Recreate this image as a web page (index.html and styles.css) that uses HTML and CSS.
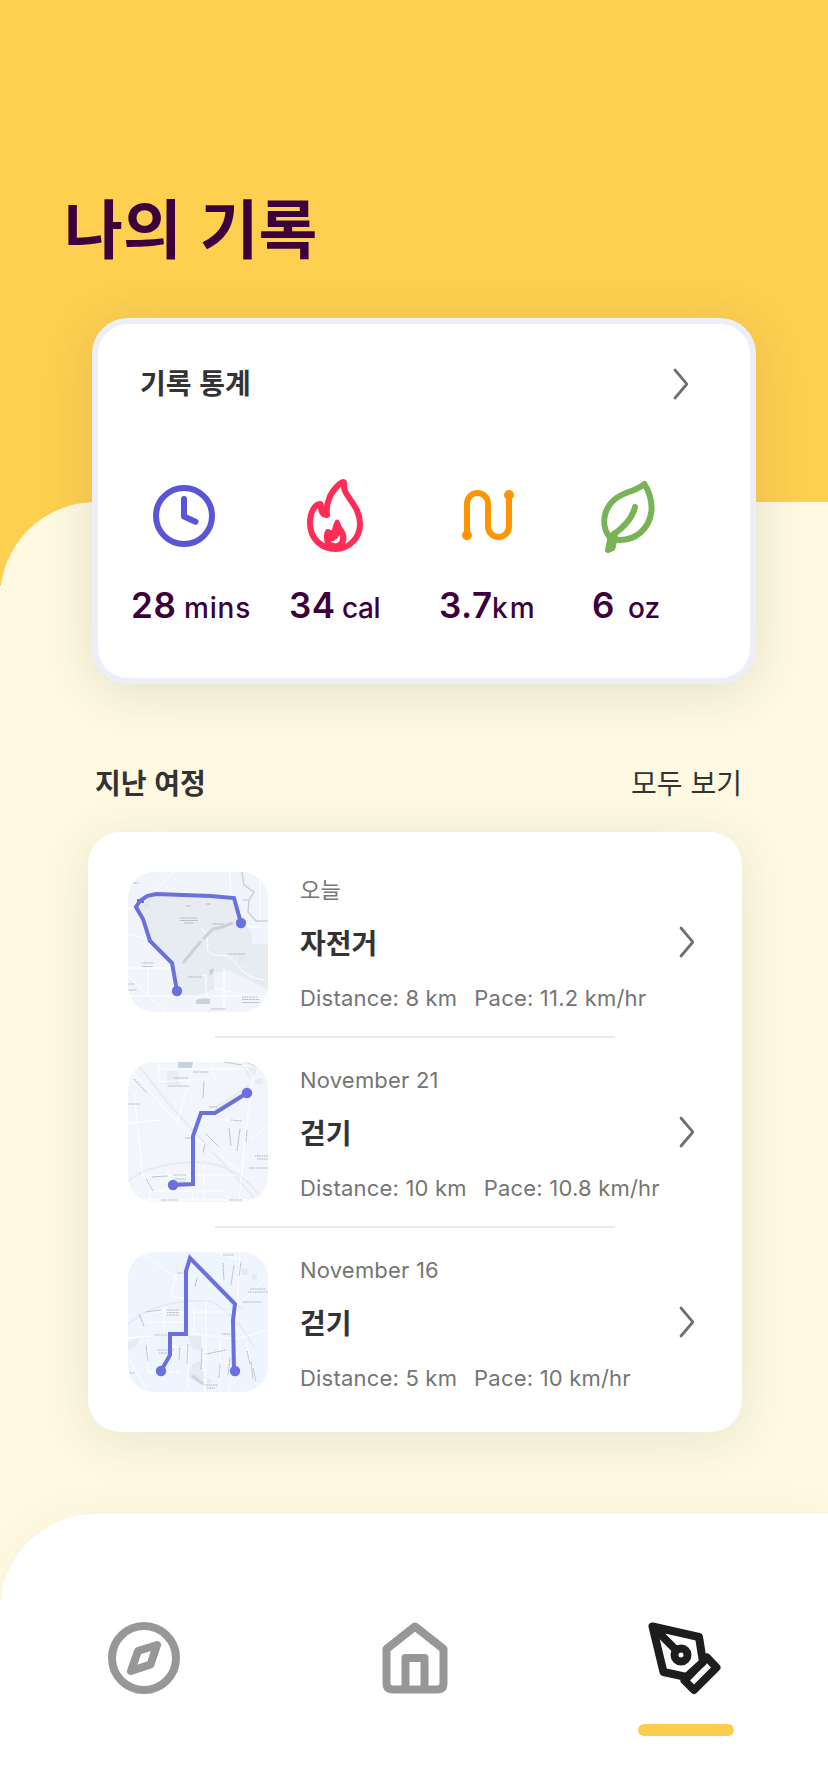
FILE: index.html
```html
<!DOCTYPE html>
<html lang="ko">
<head>
<meta charset="utf-8">
<title>나의 기록</title>
<link rel="stylesheet" href="styles.css">
</head>
<body>
<div class="app">
  <header class="hero"><h1 class="hero-title">나의 기록</h1></header>
  <main class="sheet">
    <section class="stats">
      <div class="stats-head">
        <h2 class="label">기록 통계</h2>
        <svg class="chevron" viewBox="0 0 18 34"><path d="M3 3 14.5 16.6Q15 17 14.5 17.5L3 31"/></svg>
      </div>
      <div class="stats-grid">
        <div class="stat">
          <svg class="stat-icon clock" viewBox="142 474 84 84"><circle cx="184" cy="516" r="28"/><path d="M184 499V516.5L195.500 521.7"/></svg>
          <p class="value"><b class="n28">28</b><span class="mins">mins</span></p>
        </div>
        <div class="stat">
          <svg class="stat-icon flame" viewBox="293 474 84 84"><path d="M343 482C346 482 342 486 345.500 492C350 501 360 509 360 524C360 538 349 549 335.500 549C322 549 310 539 310 523C310 511 316 504 320 504C322 504 320 509 322 512C324 515 327 515 327 515C327 515 326 506 329 499C332 490 341 482 343 482Z"/><path class="ember" d="M325.500 545C323 538 323.500 529.500 327.500 529C330 528.700 331 531 332 530C333.500 524 335 519.500 337 519.500C340 519.500 340 524 342 527C345 531 347 535 346.500 539C346 542 345 545 343 547L334 549Z"/><path class="ember-core" d="M339.500 534.300Q341.500 541 337 543Q333 544 330.700 541.500Q337.500 541 339.500 534.300Z"/></svg>
          <p class="value"><b class="n34">34</b><span class="cal">cal</span></p>
        </div>
        <div class="stat">
          <svg class="stat-icon route" viewBox="446 474 84 84"><path d="M467 535V503.500A10.500 10.500 0 0 1 488 503.500V526.500A10.500 10.500 0 0 0 509 526.500V495"/><circle cx="467" cy="535.300" r="2"/><circle cx="509" cy="495" r="2"/></svg>
          <p class="value"><b class="n37">3.7</b><span class="km">km</span></p>
        </div>
        <div class="stat">
          <svg class="stat-icon leaf" viewBox="586 474 84 84"><path d="M644.500 484C650 493 652 503 651.500 511C649 530 635 540 620 540C615 540 611 539 609.500 537C604 530 603.500 521 605 515C608 502 619 495 630 491.500C637 489 641 487 644.500 484Z"/><path d="M635 507C632 520 622 529 611 536M611 536 608 550 612.500 548 615 537"/></svg>
          <p class="value"><b class="n6">6</b><span class="oz">oz</span></p>
        </div>
      </div>
    </section>

    <div class="section-head"><h2 class="label">지난 여정</h2><a class="see-all">모두 보기</a></div>

    <section class="trips">
      <article class="trip">
        <svg class="map" viewBox="0 0 140 140">
          <rect width="140" height="140" fill="#f1f5fb"/>
          <path fill="#e7ecf0" d="M12 29 28 24 106 27 113 48 124 60 124 72 140 72V118L121 108 99 98 86 101 86 117 69 124 50 124 43 92 22 68 8 34Z"/>
          <path class="road" d="M0 96H44M0 37 12 33 28 18 46 0M0 104 38 140M132 0V56L113 53M0 124H140M96 96V140M20 96V122M75 103H78V128M103 28 102 0M74 56Q82 64 79 78Q86 86 94 83Q104 84 110 94Q118 106 136 108M0 62 22 68M86 116 140 128"/>
          <path class="water" d="M55 91 64 80 73 69 M75 67 85 57 91 56 105 51" stroke-width="3"/>
          <path class="water" d="M114 0 116 13 126 20 121 28 120 40 128 49H140" stroke-width="1.500"/>
          <path fill="#c8d2d9" d="M68 128Q75 125 82 127V132H68ZM81 98 86 96 85 101 82 104Z"/>
          <path fill="#dfe5ea" d="M14 34 21 30 23 34 17 37ZM110 85 116 87 115 91Z"/>
          <path class="names" d="M52 46H69M52 48.500H70M56 51H66M84 52H96M100 82H117M60 105H74M14 91H26M14 94.500H25M4 11H11M0 112H7M0 118H9M114 125H130M114 127.500H131M114 130.500H132M83 137H98M115 28H120M58 34H63M78 32H83"/>
          <path class="track" d="M49 119 44 91 22 69 15 47 8 35 12 29 19 24 28 22 83 24 106 26 113 51"/>
          <circle cx="49" cy="119" r="5.200"/><circle cx="113" cy="51" r="5.200"/>
          <path fill="#6b70df" d="M9 27H16V31H9Z"/>
        </svg>
        <div class="info"><p class="meta">오늘</p><h3 class="name">자전거</h3><p class="meta figures"><span>Distance: 8 km</span><span>Pace: 11.2 km/hr</span></p></div>
        <svg class="chevron" viewBox="0 0 18 34"><path d="M3 3 14.500 16.600Q15 17 14.500 17.500L3 31"/></svg>
      </article>
      <hr class="rule">
      <article class="trip">
        <svg class="map" viewBox="0 0 140 140">
          <rect width="140" height="140" fill="#f2f5fb"/>
          <path fill="#e7edf1" d="M39 9H51V23H39ZM86 45 121 22 122 30 88 51ZM115 5H128V14L121 17ZM126 20 131 15 135 18 134 23 128 22Z"/>
          <path fill="#c8d4dc" d="M50 0H65V6H50Z"/>
          <path stroke="#e7ebf3" fill="none" stroke-width="2" d="M8 0 40 41 126 135M0 120Q14 103 66 100Q110 100 136 140"/>
          <path class="road" d="M0 4 54 66 112 109M31 7H120M31 0V20L74 17M117 4 126 16M140 0 125 15 118 68 111 138M0 138H140M22 138V127L14 110M49 62 66 0M6 30 15 116M68 98 64 138M82 0 88 20M122 78 140 63M40 106 40 128M76 103V138M18 113H108M26 129H94M0 61 32 58M92 58H111"/>
          <path class="names" d="M46 16H61M65 10H80M40 24H61M6 17 19 31M76 19 75 36M81 45H89M103 58 114 59M78 72 91 85M101 66 103 84M112 67 109 89M77 82 75 91M57 76H67M127 94H140M129 97H140M121 106H140M18 117 25 129M24 115 40 114M45 113H58M46 117H58M49 120H58M33 138H50M101 138H114M96 0 114 3M118 0 128 4M0 42H12M119 68 118 80"/>
          <path class="track" d="M45 123 65 122V74L73 51H87L119 31"/>
          <circle cx="45" cy="123" r="5.200"/><circle cx="119" cy="31" r="5.200"/>
        </svg>
        <div class="info"><p class="meta">November 21</p><h3 class="name">걷기</h3><p class="meta figures"><span>Distance: 10 km</span><span>Pace: 10.8 km/hr</span></p></div>
        <svg class="chevron" viewBox="0 0 18 34"><path d="M3 3 14.500 16.600Q15 17 14.500 17.500L3 31"/></svg>
      </article>
      <hr class="rule">
      <article class="trip">
        <svg class="map" viewBox="0 0 140 140">
          <rect width="140" height="140" fill="#eef5ff"/>
          <path fill="#e3ebf4" d="M60 84H74V98L65 97ZM0 90 11 86 8 94 0 98ZM114 17H120V23H114ZM64 113 71 109 76 122 85 130 74 132 60 124ZM124 22H129V28H124Z"/>
          <path d="M64 124 75 132" stroke="#c9d6df" stroke-width="3"/>
          <path stroke="#e3eaf5" fill="none" stroke-width="1.500" d="M0 72Q30 46 82 49Q108 62 126 95M60 0Q78 33 116 58"/>
          <path class="road" d="M0 86 60 81 109 87 140 78M112 0 109 54 107 86 101 140M0 106 20 140M86 0 110 7M48 22 43 44 60 48M13 0 50 27M78 48V134M20 60H106M20 70H54M66 55V80M36 55V80M20 90V120H52M74 82 77 140M92 87V138M118 90 130 140M110 54 140 24M43 94 60 96V135"/>
          <path class="names" d="M95 3H106M95 11 96 28M106 13 103 33M113 10 111 24M122 37H138M120 40H140M114 50H134M69 26 67 35M49 21H58M18 60 33 58M39 58H51M39 60.500H51M39 63H51M11 62 16 74M26 83H41M94 82H104M29 98H46M31 101H43M18 93 20 109M52 94 51 108M60 92 59 112M74 96 73 117M78 102 98 98M102 106 100 123M92 112 91 126M119 99 122 112M123 109 125 127M125 116 128 130M76 133H90M79 136H87M0 121H7"/>
          <path class="track" d="M33 119 42 103V82H58V19L62 6 107 52 105 68 106 119"/>
          <circle cx="33" cy="119" r="5.200"/><circle cx="107" cy="119" r="5.200"/>
        </svg>
        <div class="info"><p class="meta">November 16</p><h3 class="name">걷기</h3><p class="meta figures"><span>Distance: 5 km</span><span>Pace: 10 km/hr</span></p></div>
        <svg class="chevron" viewBox="0 0 18 34"><path d="M3 3 14.500 16.600Q15 17 14.500 17.500L3 31"/></svg>
      </article>
    </section>

    <nav class="tabs">
      <a class="tab"><svg viewBox="0 0 80 80"><circle cx="40" cy="40" r="32"/><path d="M53 27 34 33 27 53 46.500 46.500Z"/></svg></a>
      <a class="tab"><svg viewBox="0 0 80 80"><path d="M40 8.500 11.500 31V65Q11.500 71.500 18 71.500H62Q68.500 71.500 68.500 65V31ZM30.500 71V40H49.500V71"/></svg></a>
      <a class="tab active"><svg viewBox="2 0 80 80"><path d="M8.500 8.500 55 19 59 44 42.500 59 19.500 54ZM9 9 32 32M63 39.500 72.500 49.500 50 72 40.500 62.500Z"/><circle cx="37" cy="37" r="6.500"/></svg></a>
    </nav>
  </main>
</div>
</body>
</html>
```
FILE: styles.css
```css
* { box-sizing: border-box; margin: 0; padding: 0; }
body { background: #fff; font-family: Inter, "Noto Sans CJK KR", sans-serif; color: #333; }
.app { width: 828px; height: 1792px; overflow: hidden; display: flex; flex-direction: column; }
.hero { flex: none; height: 586px; padding: 177px 64px 0; background: #ffcf4f; }
.hero-title { font: 700 64px/96px "Noto Sans CJK KR", sans-serif; color: #3c003c; }
.sheet { flex: none; height: 1290px; margin-top: -84px; display: flex; flex-direction: column; background: #fef9e0; border-radius: 96px 0 0 0; }
.stats { flex: none; width: 664px; height: 366px; margin: -184px 0 0 92px; padding: 35px 0 0 42px; background: #fff; border: 6px solid #eeeef9; border-radius: 36px; box-shadow: 0 8px 50px rgba(70, 90, 100, .15); }
.stats-head { display: flex; justify-content: space-between; align-items: center; height: 50px; padding-right: 60px; }
.stats-head .label { margin-top: -4px; }
.label { font: 700 28px/42px "Noto Sans CJK KR", sans-serif; color: #333; }
.chevron { width: 18px; height: 34px; fill: none; stroke: #707070; stroke-width: 2.8; stroke-linecap: round; stroke-linejoin: round; }
.stats-grid { display: grid; grid-template-columns: 158px 150px 153px 120px; margin: 65px 0 0 -9px; }
.stat-icon { display: block; width: 84px; height: 84px; fill: none; stroke-width: 6; stroke-linecap: round; stroke-linejoin: round; }
.clock { stroke: #5856d6; margin-left: 11px; }
.flame { stroke: #ff2d55; margin-left: 4px; }
.ember { fill: #ff2d55; stroke: none; }
.ember-core { fill: #fff; stroke: none; }
.route { stroke: #ff9500; margin-left: 7px; }
.leaf { stroke: #78b356; margin-left: -6px; }
.value { display: flex; align-items: baseline; height: 50px; margin-top: 25px; color: #3c003c; font-size: 28px; font-weight: 500; line-height: 44px; white-space: nowrap; }
.value b { font-size: 35px; font-weight: 600; letter-spacing: .6px; }
.n28 { width: 53px; }
.n34 { width: 53px; }
.n37 { width: 53px; }
.n6 { width: 36px; }
.mins { letter-spacing: .8px; }
.cal { letter-spacing: -.4px; }
.km { letter-spacing: 2px; }
.section-head { display: flex; justify-content: space-between; align-items: center; height: 40px; margin: 78px 86px 0 95px; }
.see-all { font: 400 28px/42px "Noto Sans CJK KR", sans-serif; }
.trips { flex: none; width: 654px; height: 600px; margin: 30px 0 0 88px; padding: 40px 46px 0 40px; background: #fff; border-radius: 32px; box-shadow: 0 8px 50px rgba(70, 90, 100, .12); }
.trip { display: flex; align-items: center; height: 140px; }
.map { flex: none; width: 140px; height: 140px; border-radius: 26px; overflow: hidden; }
.road { fill: none; stroke: #fff; stroke-width: 1; }
.water { fill: none; stroke: #c8d2d9; }
.names { fill: none; stroke: #8c9298; stroke-width: 1; stroke-dasharray: 1.500 .5 2 .5; opacity: .6; }
.track { fill: none; stroke: #6b70df; stroke-width: 4; }
.map circle { fill: #6b70df; }
.info { flex: 1; height: 140px; padding: 2px 0 0 32px; }
.meta { font-size: 22px; line-height: 32px; letter-spacing: .2px; color: #757575; font-weight: 400; white-space: nowrap; }
.name { margin-top: 15px; font: 700 28px/42px "Noto Sans CJK KR", sans-serif; color: #333; }
.figures { display: flex; gap: 17px; margin-top: 19px; }
.rule { width: 400px; height: 2px; margin: 24px 0 24px 87px; border: 0; background: #e9e9e9; }
.tabs { flex: none; display: flex; justify-content: space-between; height: 278px; margin-top: 82px; padding: 104px 94px 0 96px; background: #fff; border-radius: 96px 0 0 0; box-shadow: 0 0 50px rgba(70, 90, 100, .04); }
.tab { width: 96px; height: 119px; }
.tab svg { display: block; width: 80px; height: 80px; margin: 0 auto; fill: none; stroke: #979797; stroke-width: 8; stroke-linecap: round; stroke-linejoin: round; }
.tab.active svg { stroke: #1d1d1d; }
.tab.active::after { content: ""; display: block; height: 12px; margin-top: 26px; border-radius: 6px; background: #ffcd4d; }
```
